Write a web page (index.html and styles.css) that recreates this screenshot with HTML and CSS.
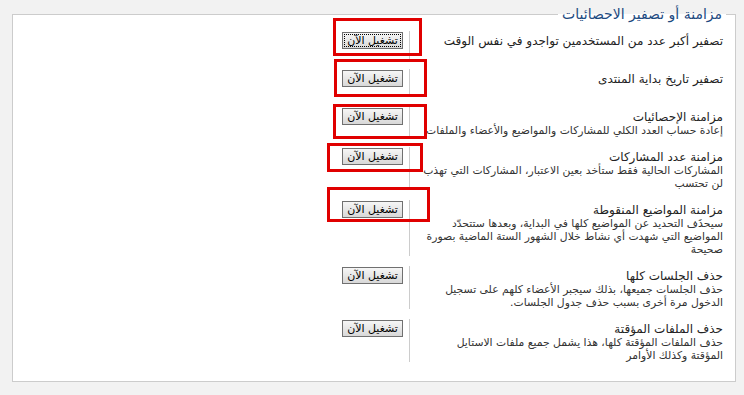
FILE: index.html
```html
<!DOCTYPE html>
<html lang="ar" dir="rtl">
<head>
  <meta charset="UTF-8">
  <title>مزامنة أو تصفير الاحصائيات</title>
  <link rel="stylesheet" href="styles.css">
</head>
<body>
  <fieldset class="panel">
    <legend>مزامنة أو تصفير الاحصائيات</legend>

    <div class="row">
      <div class="label"><span class="title">تصفير أكبر عدد من المستخدمين تواجدو في نفس الوقت</span></div>
      <div class="action"><button class="run focused">تشغيل الآن</button></div>
    </div>

    <div class="row">
      <div class="label"><span class="title">تصفير تاريخ بداية المنتدى</span></div>
      <div class="action"><button class="run">تشغيل الآن</button></div>
    </div>

    <div class="row">
      <div class="label">
        <span class="title">مزامنة الإحصائيات</span>
        <span class="desc">إعادة حساب العدد الكلي للمشاركات والمواضيع والأعضاء والملفات</span>
      </div>
      <div class="action"><button class="run">تشغيل الآن</button></div>
    </div>

    <div class="row">
      <div class="label">
        <span class="title">مزامنة عدد المشاركات</span>
        <span class="desc">المشاركات الحالية فقط ستأخد بعين الاعتبار، المشاركات التي تهذب<br>لن تحتسب</span>
      </div>
      <div class="action"><button class="run">تشغيل الآن</button></div>
    </div>

    <div class="row">
      <div class="label">
        <span class="title">مزامنة المواضيع المنقوطة</span>
        <span class="desc">سيحذَف التحديد عن المواضيع كلها في البداية، وبعدها ستتحدّد<br>المواضيع التي شهدت أي نشاط خلال الشهور الستة الماضية بصورة<br>صحيحة</span>
      </div>
      <div class="action"><button class="run">تشغيل الآن</button></div>
    </div>

    <div class="row">
      <div class="label">
        <span class="title">حذف الجلسات كلها</span>
        <span class="desc">حذف الجلسات جميعها، بذلك سيجبر الأعضاء كلهم على تسجيل<br>الدخول مرة أخرى بسبب حذف جدول الجلسات.</span>
      </div>
      <div class="action"><button class="run">تشغيل الآن</button></div>
    </div>

    <div class="row">
      <div class="label">
        <span class="title">حذف الملفات المؤقتة</span>
        <span class="desc">حذف الملفات المؤقتة كلها، هذا يشمل جميع ملفات الاستايل<br>المؤقتة وكذلك الأوامر</span>
      </div>
      <div class="action"><button class="run">تشغيل الآن</button></div>
    </div>
  </fieldset>

  <!-- red annotation boxes drawn over the screenshot -->
  <div class="mark" style="left:333px; top:18px; width:89px; height:38px;"></div>
  <div class="mark" style="left:334px; top:59px; width:93px; height:38px;"></div>
  <div class="mark" style="left:333px; top:104px; width:94px; height:35px;"></div>
  <div class="mark" style="left:327px; top:143px; width:96px; height:29px;"></div>
  <div class="mark" style="left:327px; top:187px; width:103px; height:35px;"></div>
</body>
</html>
```

FILE: styles.css
```css
body {
  margin: 0;
  padding: 0;
  background: #f2f2f2;
  font-family: "DejaVu Sans", Tahoma, sans-serif;
  font-size: 11px;
  color: #333;
  width: 744px;
  height: 395px;
  position: relative;
}
.panel {
  margin: 6px 8px 0 12px;
  padding: 8px 12px 0 12px;
  border: 1px solid #cccccc;
  background: #fff;
  box-sizing: border-box;
  height: 376px;
}
.panel legend {
  padding: 0 4px;
  margin-right: -3px;
  color: #1d4a7f;
  font-size: 14px;
  line-height: 17px;
}
.row {
  display: flex;
  min-height: 28px;
  margin-bottom: 10px;
}
.label {
  width: 305px;
  padding-left: 8px;
  padding-top: 3px;
  display: flex;
  flex-direction: column;
}
.title {
  font-size: 12px;
  line-height: 14px;
  color: #222;
  white-space: nowrap;
}
.desc {
  font-size: 10.8px;
  line-height: 13px;
  color: #333;
  white-space: nowrap;
}
.action {
  border-right: 1px solid #cccccc;
  padding: 1px 6px 0 0;
}
.run {
  display: block;
  font-family: "DejaVu Sans", Tahoma, sans-serif;
  font-size: 11px;
  width: 61px;
  height: 17px;
  padding: 0;
  border: 1px solid #707070;
  background: linear-gradient(#f6f6f6, #d8d8d8);
  color: #000;
  border-radius: 0;
  cursor: pointer;
}
.run.focused {
  outline: 1px dotted #000;
  outline-offset: -3px;
}
.mark {
  position: absolute;
  border: 3px solid #e00000;
  box-sizing: border-box;
}
```
